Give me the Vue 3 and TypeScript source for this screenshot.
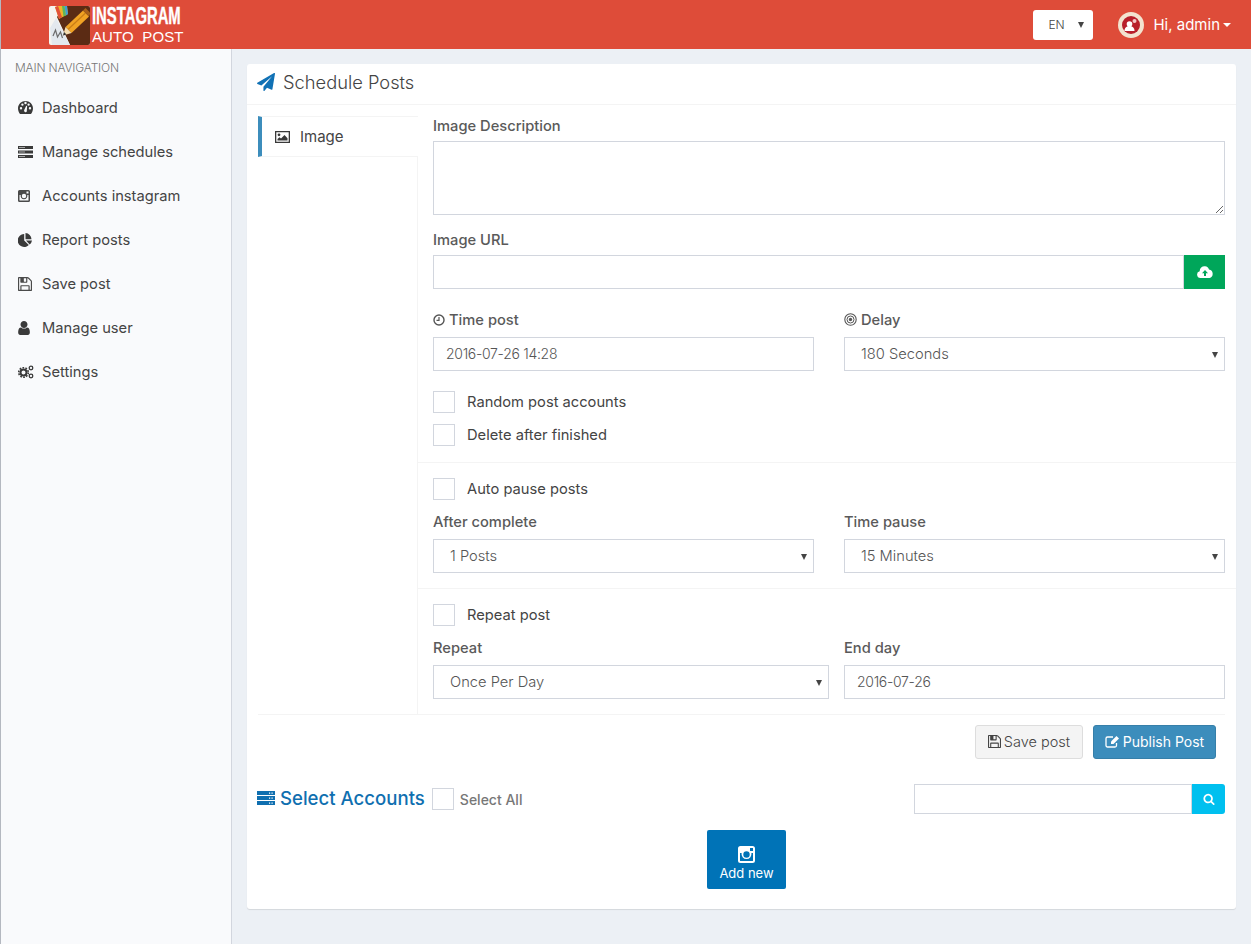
<script setup lang="ts">
const nav: { label: string; icon: string }[] = [
  { label: 'Dashboard', icon: 'dash' },
  { label: 'Manage schedules', icon: 'server' },
  { label: 'Accounts instagram', icon: 'insta' },
  { label: 'Report posts', icon: 'pie' },
  { label: 'Save post', icon: 'save' },
  { label: 'Manage user', icon: 'user' },
  { label: 'Settings', icon: 'gears' },
]
const savePath = 'M512 1536h768v-384h-768v384zm896 0h128v-896q0-14-10-38.5t-20-34.5l-281-281q-10-10-34-20t-39-10v416q0 40-28 68t-68 28h-576q-40 0-68-28t-28-68v-416h-128v1280h128v-416q0-40 28-68t68-28h832q40 0 68 28t28 68v416zm-384-928v-320q0-13-9.5-22.5t-22.5-9.5h-192q-13 0-22.5 9.5t-9.5 22.5v320q0 13 9.5 22.5t22.5 9.5h192q13 0 22.5-9.5t9.5-22.5zm640 32v928q0 40-28 68t-68 28h-1344q-40 0-68-28t-28-68v-1344q0-40 28-68t68-28h928q40 0 88 20t76 48l280 280q28 28 48 76t20 88z'
const userPath = 'M1536 1399q0 109-62.5 187t-150.5 78h-854q-88 0-150.5-78t-62.5-187q0-85 8.5-160.5t31.5-152 58.5-131 94-89 134.5-34.5q131 128 313 128t313-128q76 0 134.5 34.5t94 89 58.5 131 31.5 152 8.5 160.5zm-256-887q0 159-112.5 271.5t-271.5 112.5-271.5-112.5-112.5-271.5 112.5-271.5 271.5-112.5 271.5 112.5 112.5 271.5z'
const planePath = 'M1764 11q33 24 27 64l-256 1536q-5 29-32 45-14 8-31 8-11 0-24-5l-453-185-242 295q-18 23-49 23-13 0-22-4-19-7-30.5-23.5t-11.5-36.5v-349l864-1059-1069 925-395-162q-37-14-40-55-2-40 32-59l1664-960q15-9 32-9 20 0 36 11z'
const searchPath = 'M1216 832q0-185-131.5-316.5t-316.5-131.5-316.5 131.5-131.5 316.5 131.5 316.5 316.5 131.5 316.5-131.5 131.5-316.5zm512 832q0 52-38 90t-90 38q-54 0-90-38l-343-342q-179 124-399 124-143 0-273.5-55.5t-225-150-150-225-55.5-273.5 55.5-273.5 150-225 225-150 273.5-55.5 273.5 55.5 225 150 150 225 55.5 273.5q0 220-124 399l343 343q37 37 37 90z'
</script>

<template>
  <div class="app">
    <header class="topbar">
      <div class="brand">
        <svg class="logo" width="41" height="39" viewBox="0 0 41 39">
          <rect width="41" height="39" rx="2" fill="#f6f4f0" />
          <path d="M16 0H39a2 2 0 0 1 2 2V37a2 2 0 0 1-2 2H21L15 26L8 11Z" fill="#5b2b14" />
          <path d="M1 22L7 12L21 39H3Z" fill="#e3e8ee" />
          <path d="M4 30l2.500-6 2 7 3-5 2 6" fill="none" stroke="#6c6c6c" stroke-width="1.200" />
          <path d="M6 1L9 0H18L19 8L10 13Z" fill="#f0b429" />
          <path d="M6 1L9 0L13 11L10 13Z" fill="#e2523a" />
          <path d="M13 0H15.500L17 9.500L14.500 10.500Z" fill="#5fb65a" />
          <path d="M15.500 0H18L19 8L17 9.500Z" fill="#3d9fd8" />
          <path d="M16.500 21L34 4.500L40 10.500L22.500 27Z" fill="#f0a324" />
          <path d="M19 23.500L36.500 7" stroke="#c97d16" stroke-width="1.200" />
          <path d="M34 4.500L36.500 2L41 6.500V8L40 10.500Z" fill="#a8601b" />
          <path d="M16.500 21L22.500 27L14 29.500Z" fill="#f5dcb0" />
          <path d="M14 29.500L15 26L17.500 28.500Z" fill="#333" />
        </svg>
        <div class="brand-text">
          <span class="brand-top">INSTAGRAM</span>
          <span class="brand-bottom">AUTO&nbsp; POST</span>
        </div>
      </div>
      <div class="top-right">
        <div class="lang">EN<i class="tri"></i></div>
        <div class="account">
          <svg class="avatar" width="26" height="26" viewBox="0 0 26 26">
            <circle cx="13" cy="13" r="13" fill="#f3e3cf" />
            <circle cx="13" cy="13" r="9" fill="#b81f2a" />
            <circle cx="11.500" cy="12" r="2.800" fill="#fff" />
            <path d="M6.500 19c0-3.400 2.200-5 5-5s5 1.600 5 5z" fill="#fff" />
            <circle cx="16.500" cy="9" r="2" fill="#f3c6c6" />
          </svg>
          <span>Hi, admin</span>
          <i class="caret"></i>
        </div>
      </div>
    </header>

    <div class="shell">
      <aside class="sidebar">
        <div class="nav-head">MAIN NAVIGATION</div>
        <nav>
          <a v-for="item in nav" :key="item.label" class="nav-item">
            <span class="nav-icon">
              <svg v-if="item.icon === 'dash'" width="15" height="13" viewBox="0 0 15 13">
                <path fill-rule="evenodd" d="M7.500 0C3.400 0 0 3.200 0 7.300c0 2.100.7 4 2 5.700h11c1.300-1.700 2-3.600 2-5.700C15 3.200 11.600 0 7.500 0zM3 8.500a1.200 1.200 0 1 1 0-2.400 1.200 1.200 0 0 1 0 2.400zm1.400-3.700a1.200 1.200 0 1 1 0-2.400 1.200 1.200 0 0 1 0 2.400zM7.500 3.200a1.200 1.200 0 1 1 0-2.400 1.200 1.200 0 0 1 0 2.400zM8.800 10.500a1.500 1.500 0 0 1-2.700-1.200l2.100-4.600.9.300zM12 8.500a1.200 1.200 0 1 1 0-2.400 1.200 1.200 0 0 1 0 2.400zm-1.400-3.700a1.200 1.200 0 1 1 0-2.400 1.200 1.200 0 0 1 0 2.400z" fill="#3a3a3a" />
              </svg>
              <svg v-else-if="item.icon === 'server'" width="15" height="12" viewBox="0 0 15 12">
                <path d="M0 0h15v3H0zM0 4.500h15v3H0zM0 9h15v3H0z" fill="#3a3a3a" />
                <path d="M1 1h6v1H1zM1 5.500h6v1H1zM1 10h6v1H1z" fill="#fff" opacity=".55" />
              </svg>
              <svg v-else-if="item.icon === 'insta'" width="12" height="12" viewBox="0 0 12 12">
                <path fill-rule="evenodd" d="M1.500 0h9A1.500 1.500 0 0 1 12 1.500v9a1.500 1.500 0 0 1-1.500 1.500h-9A1.500 1.500 0 0 1 0 10.500v-9A1.500 1.500 0 0 1 1.500 0zM8.500 1.500v2h2v-2zM1.500 5v5.500h9V5H9.300a3.400 3.400 0 1 1-6.600 0zM6 3.800a2.200 2.200 0 1 0 0 4.400 2.200 2.200 0 0 0 0-4.400z" fill="#4a4a4a" />
              </svg>
              <svg v-else-if="item.icon === 'pie'" width="14" height="14" viewBox="0 0 14 14">
                <path d="M6.200 1v6.500l4.600 4.600A6.500 6.500 0 1 1 6.200 1z" fill="#3a3a3a" />
                <path d="M7.500 0a6.500 6.500 0 0 1 6 6.300h-6zM8 7.500h6a6.500 6.500 0 0 1-2.300 4z" fill="#3a3a3a" />
              </svg>
              <svg v-else-if="item.icon === 'save'" width="14" height="14" viewBox="128 128 1536 1536">
                <path :d="savePath" fill="#4a4a4a" />
              </svg>
              <svg v-else-if="item.icon === 'user'" width="12" height="14" viewBox="256 128 1280 1536">
                <path :d="userPath" fill="#3a3a3a" />
              </svg>
              <svg v-else width="16" height="14" viewBox="0 0 16 14">
                <circle cx="5.500" cy="7.500" r="3" fill="none" stroke="#3a3a3a" stroke-width="2" />
                <circle cx="5.500" cy="7.500" r="4.800" fill="none" stroke="#3a3a3a" stroke-width="1.600" stroke-dasharray="1.700 1.300" />
                <circle cx="13" cy="3" r="1.800" fill="none" stroke="#3a3a3a" stroke-width="1.300" />
                <circle cx="13" cy="11" r="1.800" fill="none" stroke="#3a3a3a" stroke-width="1.300" />
              </svg>
            </span>
            <span>{{ item.label }}</span>
          </a>
        </nav>
      </aside>

      <main class="content">
        <section class="card">
          <div class="card-head">
            <svg width="18" height="18" viewBox="0 0 1792 1792"><path :d="planePath" fill="#1071b5" /></svg>
            <h1>Schedule Posts</h1>
          </div>
          <div class="card-body">
            <div class="tabs">
              <div class="tab-col">
                <div class="tab">
                  <svg width="15" height="12" viewBox="0 0 15 12">
                    <path fill-rule="evenodd" d="M0 0h15v12H0zM1.300 1.300v9.400h12.400V1.300z" fill="#3a3a3a" />
                    <circle cx="4" cy="3.800" r="1.400" fill="#3a3a3a" />
                    <path d="M2.500 9.500V8l2-1.800 1.500 1.300L9.500 4l3 3.200v2.300z" fill="#3a3a3a" />
                  </svg>
                  <span>Image</span>
                </div>
              </div>
              <div class="pane">
                <div class="pane-section first">
                  <label class="lbl lbl-a">Image Description</label>
                  <textarea class="field area"></textarea>
                  <label class="lbl lbl-b">Image URL</label>
                  <div class="url-row">
                    <input class="field grow" />
                    <button class="upload">
                      <svg width="16" height="12" viewBox="0 0 16 12">
                        <path fill-rule="evenodd" d="M3.600 12A3.400 3.400 0 0 1 2.700 5.300 4.800 4.800 0 0 1 8 0.300a4.400 4.400 0 0 1 4 3.300A4.300 4.300 0 0 1 12.500 12zM8 4L5 7.200h2V10h2V7.200h2z" fill="#fff" />
                      </svg>
                    </button>
                  </div>
                  <div class="two top-gap">
                    <div>
                      <label class="lbl lbl-c">
                        <svg width="12" height="12" viewBox="0 0 11 11">
                          <circle cx="5.500" cy="5.500" r="4.600" fill="none" stroke="#555" stroke-width="1.300" />
                          <path d="M5.500 2.800v3H3.200" fill="none" stroke="#555" stroke-width="1.100" />
                        </svg>
                        Time post
                      </label>
                      <input class="field" value="2016-07-26 14:28" />
                    </div>
                    <div>
                      <label class="lbl lbl-c">
                        <svg width="13" height="13" viewBox="0 0 13 13">
                          <circle cx="6.500" cy="6.500" r="5.700" fill="none" stroke="#555" stroke-width="1.100" />
                          <circle cx="6.500" cy="6.500" r="3.500" fill="none" stroke="#555" stroke-width="1" />
                          <circle cx="6.500" cy="6.500" r="1.700" fill="#555" />
                        </svg>
                        Delay
                      </label>
                      <div class="sel">180 Seconds</div>
                    </div>
                  </div>
                  <div class="check c1"><i class="box"></i><span>Random post accounts</span></div>
                  <div class="check c2"><i class="box"></i><span>Delete after finished</span></div>
                </div>

                <div class="pane-section">
                  <div class="check"><i class="box"></i><span>Auto pause posts</span></div>
                  <div class="two">
                    <div>
                      <label class="lbl lbl-d">After complete</label>
                      <div class="sel">1 Posts</div>
                    </div>
                    <div>
                      <label class="lbl lbl-d">Time pause</label>
                      <div class="sel">15 Minutes</div>
                    </div>
                  </div>
                </div>

                <div class="pane-section last">
                  <div class="check"><i class="box"></i><span>Repeat post</span></div>
                  <div class="two wide">
                    <div>
                      <label class="lbl lbl-d">Repeat</label>
                      <div class="sel">Once Per Day</div>
                    </div>
                    <div>
                      <label class="lbl lbl-d">End day</label>
                      <input class="field" value="2016-07-26" />
                    </div>
                  </div>
                </div>
              </div>
            </div>

            <div class="actions">
              <button class="btn btn-save">
                <svg width="13" height="13" viewBox="128 128 1536 1536"><path :d="savePath" fill="#444" /></svg>
                Save post
              </button>
              <button class="btn btn-pub">
                <svg width="15" height="13" viewBox="0 0 15 13">
                  <path d="M11.500 8v2.500A1.500 1.500 0 0 1 10 12H2.500A1.500 1.500 0 0 1 1 10.500V3.500A1.500 1.500 0 0 1 2.500 2H8" fill="none" stroke="#fff" stroke-width="1.300" />
                  <path d="M11.500 1L14 3.500 8.500 9H6V6.500z" fill="#fff" />
                </svg>
                Publish Post
              </button>
            </div>

            <div class="accounts">
              <svg width="18" height="14" viewBox="0 0 18 14">
                <path d="M0 0h18v4H0zM0 5h18v4H0zM0 10h18v4H0z" fill="#0f6fb0" />
                <path d="M12 1.500h1.200v1.200H12zM14.500 1.500h1.200v1.200h-1.200zM12 6.500h1.200v1.200H12zM14.500 6.500h1.200v1.200h-1.200zM12 11.500h1.200v1.200H12zM14.500 11.500h1.200v1.200h-1.200z" fill="#fff" />
              </svg>
              <h2>Select Accounts</h2>
              <i class="box"></i>
              <span class="all">Select All</span>
              <div class="search">
                <input class="field grow" />
                <button class="search-btn">
                  <svg width="12" height="12" viewBox="0 0 1792 1792"><path :d="searchPath" fill="#fff" /></svg>
                </button>
              </div>
            </div>

            <div class="add-wrap">
              <button class="add">
                <svg width="17" height="17" viewBox="0 0 17 17">
                  <path fill-rule="evenodd" d="M2.500 0h12A2.500 2.500 0 0 1 17 2.500v12a2.500 2.500 0 0 1-2.500 2.500h-12A2.500 2.500 0 0 1 0 14.500v-12A2.500 2.500 0 0 1 2.500 0zM12 2v3h3V2zM2 7v7.500a.5.500 0 0 0 .5.500h12a.5.500 0 0 0 .5-.500V7h-1.600a5 5 0 1 1-9.800 0zM8.500 5.300a3.200 3.200 0 1 0 0 6.400 3.200 3.200 0 0 0 0-6.400z" fill="#fff" />
                </svg>
                <span>Add new</span>
              </button>
            </div>
          </div>
        </section>
      </main>
    </div>
  </div>
</template>

<style>
html, body { margin: 0; padding: 0; }
</style>

<style scoped>
* { box-sizing: border-box; }
.app {
  width: 1251px;
  height: 944px;
  overflow: hidden;
  display: flex;
  flex-direction: column;
  font-family: Inter, "Open Sans", "Liberation Sans", sans-serif;
  font-size: 14.700px;
  color: #444;
  background: #ecf0f5;
  border-left: 1px solid #b4b8c0;
}
.topbar {
  height: 49px;
  flex: none;
  background: #de4c39;
  display: flex;
  align-items: center;
  justify-content: space-between;
  padding: 0 20px 0 48px;
}
.brand { display: flex; align-items: center; gap: 2px; }
.logo { display: block; margin-top: 1px; }
.brand-text { display: flex; flex-direction: column; color: #fff; width: 92px; }
.brand-top {
  font-family: "Liberation Sans", sans-serif;
  font-weight: 700;
  font-size: 23px;
  line-height: 22px;
  white-space: nowrap;
  transform: scaleX(.645);
  transform-origin: left center;
  -webkit-text-stroke: .4px #fff;
}
.brand-bottom {
  font-family: "Liberation Sans", sans-serif;
  font-size: 15px;
  line-height: 17px;
  white-space: nowrap;
  letter-spacing: .1px;
  margin-top: 1px;
}
.top-right { display: flex; align-items: center; gap: 25px; }
.lang {
  width: 60px;
  height: 30px;
  background: #fff;
  border-radius: 3px;
  font-size: 12px;
  font-weight: 300;
  color: #444;
  display: flex;
  align-items: center;
  padding-left: 15px;
  position: relative;
}
.tri {
  position: absolute;
  right: 9px;
  top: 12px;
  border-left: 3px solid transparent;
  border-right: 3px solid transparent;
  border-top: 6px solid #444;
}
.account { display: flex; align-items: center; color: #fff; font-size: 15px; }
.avatar { margin-right: 9px; }
.caret {
  margin-left: 3px;
  border-left: 4px solid transparent;
  border-right: 4px solid transparent;
  border-top: 4px solid #fff;
}
.shell { flex: 1; display: flex; min-height: 0; }
.sidebar {
  width: 231px;
  flex: none;
  background: #f9fafc;
  border-right: 1px solid #d2d6de;
}
.nav-head {
  padding: 11px 0 0 14px;
  height: 37px;
  font-size: 12px;
  font-weight: 300;
  color: #777;
  letter-spacing: -.2px;
}
.nav-item {
  display: flex;
  align-items: center;
  height: 44px;
  padding: 0 0 1px 17px;
  color: #444;
  font-size: 14.700px;
}
.nav-icon { width: 24px; display: flex; align-items: center; }
.content { flex: 1; padding: 15px 15px 0; min-width: 0; }
.card {
  height: 845px;
  background: #fff;
  border-radius: 3px;
  box-shadow: 0 1px 1px rgba(0, 0, 0, .1);
}
.card-head {
  height: 41px;
  border-bottom: 1px solid #f4f4f4;
  display: flex;
  align-items: center;
  padding: 0 0 4px 10px;
  gap: 8px;
}
.card-head h1 { margin: 0; font-size: 18.300px; font-weight: 300; color: #444; }
.card-body { padding: 11px 11px 0; }
.tabs {
  display: flex;
  border-bottom: 1px solid #f4f4f4;
  height: 599px;
}
.tab-col { width: 159px; flex: none; }
.tab {
  height: 41px;
  border-left: 4px solid #3c8dbc;
  border-top: 1px solid #f4f4f4;
  border-bottom: 1px solid #f4f4f4;
  display: flex;
  align-items: center;
  padding-left: 13px;
  gap: 10px;
  font-size: 15px;
  margin-right: -1px;
  background: #fff;
  position: relative;
}
.pane { flex: 1; border-left: 1px solid #f4f4f4; min-width: 0; }
.pane-section { padding: 15px 11px 15px 15px; border-bottom: 1px solid #f4f4f4; margin-right: -11px; }
.pane-section.first { padding-top: 0; padding-bottom: 16px; }
.pane-section.last { border-bottom: 0; }
.lbl {
  display: flex;
  align-items: center;
  gap: 4px;
  height: 20px;
  padding-bottom: 1px;
  font-size: 14.700px;
  font-weight: 500;
  color: #5a5a5a;
}
.lbl-a, .lbl-b { margin-bottom: 5px; }
.lbl-b { margin-top: 15px; }
.lbl-c, .lbl-d { margin-bottom: 7px; }
.lbl-d { margin-top: 12px; }
.field {
  display: block;
  width: 100%;
  height: 34px;
  border: 1px solid #d2d6de;
  padding: 0 12px 2px;
  font: 300 14px Inter, "Open Sans", sans-serif;
  letter-spacing: -.3px;
  color: #555;
  outline: none;
  background: #fff;
  border-radius: 0;
}
.area { height: 74px; resize: vertical; }
.url-row { display: flex; }
.grow { flex: 1; min-width: 0; }
.upload {
  width: 41px;
  height: 34px;
  background: #00a65a;
  border: 0;
  padding: 0;
  display: flex;
  align-items: center;
  justify-content: center;
}
.two { display: grid; grid-template-columns: 381px 381px; column-gap: 30px; }
.two.wide { grid-template-columns: 396px 381px; column-gap: 15px; }
.top-gap { margin-top: 21px; }
.sel {
  height: 34px;
  border: 1px solid #d2d6de;
  padding: 0 0 1px 16px;
  font-weight: 300;
  color: #555;
  display: flex;
  align-items: center;
  position: relative;
}
.sel::after {
  content: "";
  position: absolute;
  right: 6px;
  top: 14px;
  border-left: 3px solid transparent;
  border-right: 3px solid transparent;
  border-top: 6px solid #444;
}
.check { display: flex; align-items: center; gap: 12px; height: 22px; }
.c1 { margin-top: 20px; }
.c2 { margin-top: 11px; }
.box { display: block; width: 22px; height: 22px; border: 1px solid #d2d6de; background: #fff; flex: none; }
.actions { display: flex; justify-content: flex-end; gap: 10px; padding: 10px 9px 0 0; }
.btn {
  height: 34px;
  border-radius: 3px;
  font: 300 14.500px Inter, "Open Sans", sans-serif;
  display: flex;
  align-items: center;
  justify-content: center;
  gap: 3px;
  padding: 0 0 2px;
}
.btn-save { width: 108px; background: #f4f4f4; border: 1px solid #ddd; color: #444; }
.btn-pub { width: 123px; background: #3c8dbc; border: 1px solid #367fa9; color: #fff; font-weight: 400; font-size: 14px; }
.accounts { display: flex; align-items: center; height: 30px; margin-top: 25px; }
.accounts > svg { margin-left: -1px; margin-right: 5px; margin-bottom: 3px; }
.accounts h2 { margin: 0 7px 3px 0; font-size: 18.600px; font-weight: 500; color: #0f6fb0; white-space: nowrap; }
.all { margin-left: 6px; font-weight: 500; color: #777; font-size: 14px; }
.search { margin-left: auto; width: 311px; display: flex; }
.search .field { height: 30px; }
.search-btn {
  width: 33px;
  height: 30px;
  background: #00c0ef;
  border: 0;
  padding: 0;
  border-radius: 0 3px 3px 0;
  display: flex;
  align-items: center;
  justify-content: center;
}
.add-wrap { display: flex; justify-content: center; margin-top: 16px; padding-left: 10px; }
.add {
  width: 79px;
  height: 59px;
  background: #0073b7;
  border: 0;
  border-radius: 2px;
  color: #fff;
  font: 400 13px Inter, "Open Sans", sans-serif;
  display: flex;
  flex-direction: column;
  align-items: center;
  justify-content: center;
  gap: 2px;
  padding: 8px 0 0;
}
</style>
